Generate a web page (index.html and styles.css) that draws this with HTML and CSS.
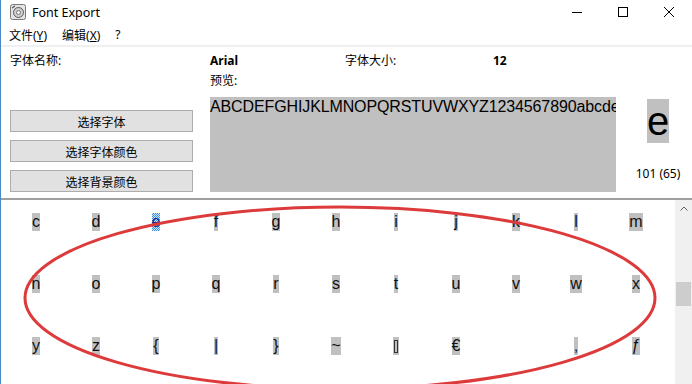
FILE: index.html
```html
<!DOCTYPE html>
<html lang="zh-CN">
<head>
    <meta charset="UTF-8">
    <title>Font Export</title>
    <link rel="stylesheet" href="styles.css">
</head>
<body>
    <div class="window">
        <div class="titlebar">
            <svg class="app-icon" width="16" height="16" viewBox="0 0 16 16">
                <rect x="0.5" y="0.5" width="15" height="15" rx="2" fill="#e4e4e4" stroke="#7a7a7a"/>
                <circle cx="8.5" cy="8.5" r="5" fill="#cfcfcf" stroke="#5a5a5a"/>
                <circle cx="8.5" cy="8.5" r="2" fill="#f4f4f4" stroke="#777"/>
                <path d="M2 4 L5 2" stroke="#555" stroke-width="1.2"/>
            </svg>
            <span class="title">Font Export</span>
            <div class="controls">
                <span class="ctl">
                    <svg width="10" height="10" viewBox="0 0 10 10"><path d="M0 5.5 H10" stroke="#000"/></svg>
                </span>
                <span class="ctl">
                    <svg width="10" height="10" viewBox="0 0 10 10"><rect x="0.5" y="0.5" width="9" height="9" fill="none" stroke="#000"/></svg>
                </span>
                <span class="ctl">
                    <svg width="10" height="10" viewBox="0 0 10 10"><path d="M0 0 L10 10 M10 0 L0 10" stroke="#000"/></svg>
                </span>
            </div>
        </div>

        <div class="menubar">
            <span class="menu-item">文件(<u>Y</u>)</span>
            <span class="menu-item">编辑(<u>X</u>)</span>
            <span class="menu-item">?</span>
        </div>

        <div class="form">
            <div class="info-row">
                <span class="info-label">字体名称:</span>
                <span class="info-value name">Arial</span>
                <span class="info-label size">字体大小:</span>
                <span class="info-value">12</span>
            </div>
            <div class="preview-label">预览:</div>
            <div class="main-row">
                <div class="buttons">
                    <button type="button">选择字体</button>
                    <button type="button">选择字体颜色</button>
                    <button type="button">选择背景颜色</button>
                </div>
                <div class="preview">ABCDEFGHIJKLMNOPQRSTUVWXYZ1234567890abcde</div>
                <div class="sample">
                    <span class="sample-char">e</span>
                    <span class="sample-code">101 (65)</span>
                </div>
            </div>
        </div>

        <div class="chars">
            <div class="char-grid">
                <span class="cell"><span class="glyph">c</span></span>
                <span class="cell"><span class="glyph">d</span></span>
                <span class="cell"><span class="glyph selected">e</span></span>
                <span class="cell"><span class="glyph">f</span></span>
                <span class="cell"><span class="glyph">g</span></span>
                <span class="cell"><span class="glyph">h</span></span>
                <span class="cell"><span class="glyph">i</span></span>
                <span class="cell"><span class="glyph">j</span></span>
                <span class="cell"><span class="glyph">k</span></span>
                <span class="cell"><span class="glyph">l</span></span>
                <span class="cell"><span class="glyph">m</span></span>

                <span class="cell"><span class="glyph">n</span></span>
                <span class="cell"><span class="glyph">o</span></span>
                <span class="cell"><span class="glyph">p</span></span>
                <span class="cell"><span class="glyph">q</span></span>
                <span class="cell"><span class="glyph">r</span></span>
                <span class="cell"><span class="glyph">s</span></span>
                <span class="cell"><span class="glyph">t</span></span>
                <span class="cell"><span class="glyph">u</span></span>
                <span class="cell"><span class="glyph">v</span></span>
                <span class="cell"><span class="glyph">w</span></span>
                <span class="cell"><span class="glyph">x</span></span>

                <span class="cell"><span class="glyph">y</span></span>
                <span class="cell"><span class="glyph">z</span></span>
                <span class="cell"><span class="glyph">{</span></span>
                <span class="cell"><span class="glyph">|</span></span>
                <span class="cell"><span class="glyph">}</span></span>
                <span class="cell"><span class="glyph">~</span></span>
                <span class="cell"><span class="glyph missing"><span class="missing-box"></span></span></span>
                <span class="cell"><span class="glyph">€</span></span>
                <span class="cell"></span>
                <span class="cell"><span class="glyph">‚</span></span>
                <span class="cell"><span class="glyph">ƒ</span></span>
            </div>
            <div class="scrollbar">
                <span class="scroll-arrow">
                    <svg width="8" height="5" viewBox="0 0 8 5"><path d="M0.5 4.5 L4 1 L7.5 4.5" fill="none" stroke="#606060"/></svg>
                </span>
                <span class="scroll-thumb"></span>
            </div>
        </div>

        <svg class="annotation" width="692" height="384" viewBox="0 0 692 384">
            <ellipse cx="340" cy="298" rx="315" ry="91" fill="none" stroke="#dd3b3b" stroke-width="3"/>
        </svg>
    </div>
</body>
</html>
```

FILE: styles.css
```css
* {
    margin: 0;
    padding: 0;
    box-sizing: border-box;
}

body {
    font-family: "Noto Sans", "Noto Sans CJK SC", sans-serif;
    font-size: 12px;
    color: #000;
    background-color: #fff;
}

.window {
    position: relative;
    width: 692px;
    height: 384px;
    overflow: hidden;
    border-left: 1px solid #4a88c7;
    background-color: #fff;
}

/* title bar */
.titlebar {
    height: 24px;
    display: flex;
    align-items: center;
}

.app-icon {
    margin-left: 9px;
}

.title {
    margin-left: 6px;
    font-size: 12.5px;
}

.controls {
    margin-left: auto;
    display: flex;
}

.ctl {
    width: 46px;
    height: 24px;
    display: flex;
    align-items: center;
    justify-content: center;
}

/* menu */
.menubar {
    height: 21px;
    display: flex;
    align-items: center;
    padding-left: 8px;
    gap: 15px;
}

.menu-item u {
    text-decoration: underline;
}

/* form */
.form {
    border-top: 2px solid #f0f0f0;
    padding: 5px 0 6px 0;
}

.info-row {
    display: flex;
    height: 16px;
    align-items: center;
    padding-left: 9px;
}

.info-label {
    width: 200px;
}

.info-value {
    font-weight: bold;
}

.info-value.name {
    width: 135px;
}

.info-label.size {
    width: 148px;
}

.preview-label {
    height: 16px;
    line-height: 16px;
    margin-top: 5px;
    margin-left: 209px;
}

.main-row {
    display: flex;
    margin-top: 8px;
    height: 95px;
}

.buttons {
    display: flex;
    flex-direction: column;
    gap: 8px;
    padding: 13px 0 0 9px;
    margin-right: 17px;
}

button {
    width: 183px;
    height: 22px;
    background-color: #e1e1e1;
    border: 1px solid #adadad;
    font-family: "Noto Sans CJK SC", sans-serif;
    font-size: 12px;
    color: #000;
}

.preview {
    width: 406px;
    height: 95px;
    background-color: #c0c0c0;
    font-family: "Liberation Sans", Arial, sans-serif;
    font-size: 16px;
    letter-spacing: -0.12px;
    line-height: 20px;
    white-space: nowrap;
    overflow: hidden;
}

.sample {
    width: 68px;
    margin-left: 8px;
    display: flex;
    flex-direction: column;
    align-items: center;
    padding-top: 2px;
}

.sample-char {
    background-color: #c0c0c0;
    font-family: "Liberation Sans", Arial, sans-serif;
    font-size: 40px;
    line-height: 44px;
}

.sample-code {
    margin-top: 23px;
    line-height: 16px;
}

/* character grid */
.chars {
    display: flex;
    height: 186px;
    border-top: 2px solid #a0a0a0;
}

.char-grid {
    display: grid;
    grid-template-columns: repeat(11, 60px);
    grid-auto-rows: 18px;
    row-gap: 44px;
    justify-items: center;
    padding: 13px 0 0 5px;
    font-family: "Liberation Sans", Arial, sans-serif;
    font-size: 16px;
    line-height: 18px;
}

.cell {
    display: flex;
    justify-content: center;
}

.glyph {
    background-color: #c0c0c0;
    color: #111;
}

.glyph.selected {
    color: #0a2a8a;
    background-color: #9cc8f0;
    background-image: repeating-conic-gradient(#3d8ee0 0 25%, #cfe5fa 0 50%);
    background-size: 2px 2px;
}

.glyph.missing {
    display: flex;
    align-items: center;
    padding: 0 1px;
    height: 18px;
}

.missing-box {
    width: 4px;
    height: 13px;
    border: 1px solid #333;
}

.scrollbar {
    margin-left: auto;
    width: 17px;
    background-color: #f0f0f0;
    display: flex;
    flex-direction: column;
    align-items: center;
}

.scroll-arrow {
    height: 17px;
    display: flex;
    align-items: center;
}

.scroll-thumb {
    margin-top: 65px;
    width: 15px;
    height: 24px;
    background-color: #cdcdcd;
}

/* red marker drawn over the grid */
.annotation {
    position: absolute;
    top: 0;
    left: -1px;
    pointer-events: none;
}
```
